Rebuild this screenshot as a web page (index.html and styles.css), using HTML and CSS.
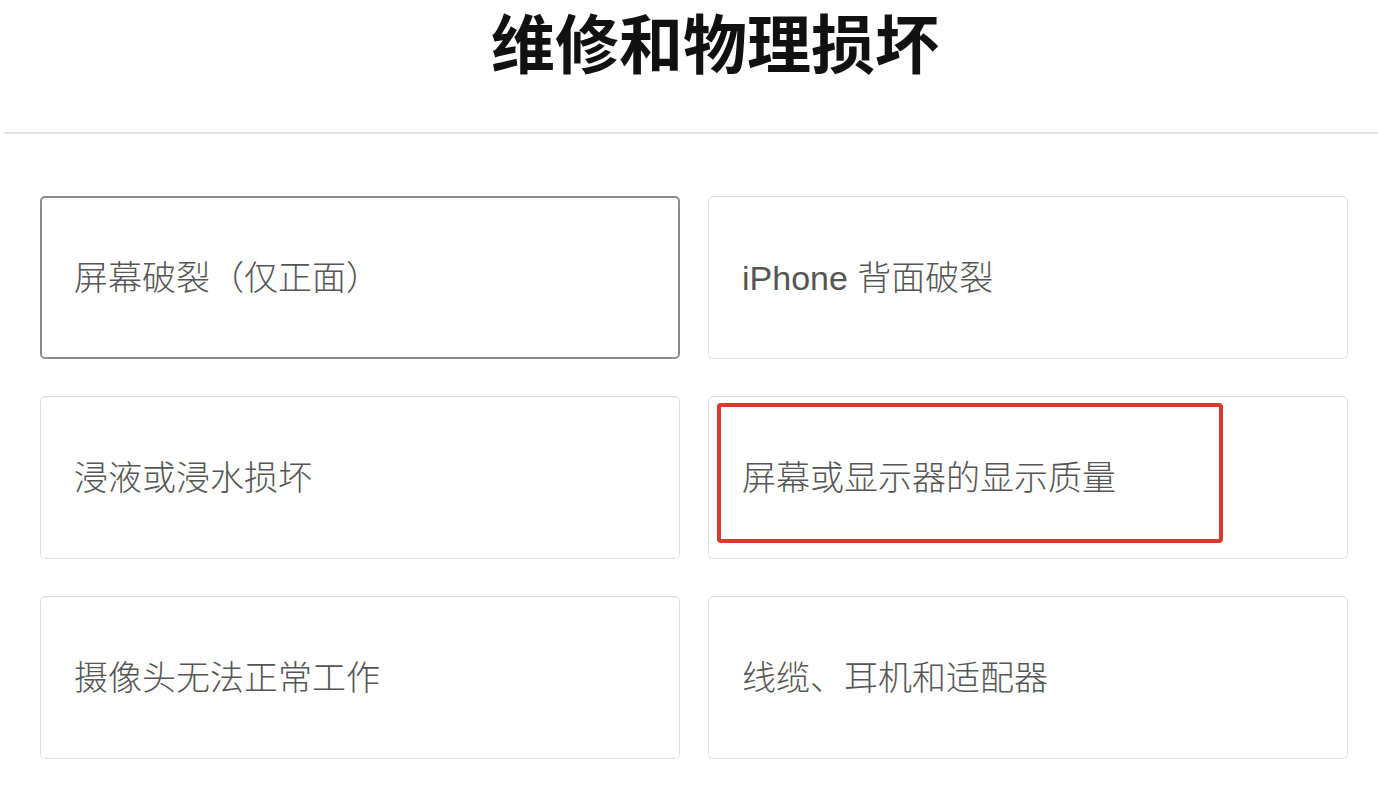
FILE: index.html
```html
<!DOCTYPE html>
<html lang="zh-CN">
<head>
<meta charset="utf-8">
<title>维修和物理损坏</title>
<link rel="stylesheet" href="styles.css">
</head>
<body>
<header class="header">
  <h1 class="title">维修和物理损坏</h1>
</header>
<hr class="divider">
<main class="grid">
  <div class="card card-active">屏幕破裂（仅正面）</div>
  <div class="card">iPhone 背面破裂</div>
  <div class="card">浸液或浸水损坏</div>
  <div class="card">屏幕或显示器的显示质量<span class="highlight"></span></div>
  <div class="card">摄像头无法正常工作</div>
  <div class="card">线缆、耳机和适配器</div>
</main>
</body>
</html>
```

FILE: styles.css
```css
html, body {
  margin: 0;
  padding: 0;
  background: #fff;
}
body {
  font-family: "Noto Sans CJK SC", "Noto Sans", sans-serif;
  width: 1378px;
  height: 790px;
  overflow: hidden;
}
.header {
  display: flex;
  justify-content: center;
  height: 132px;
  box-sizing: border-box;
}
.title {
  margin: 0;
  font-size: 64px;
  font-weight: 700;
  color: #111;
  line-height: 80px;
  padding-left: 52px;
}
.divider {
  margin: 0 0 0 4px;
  border: 0;
  border-top: 2px solid #e3e3e3;
  height: 0;
}
.grid {
  display: grid;
  grid-template-columns: 640px 640px;
  column-gap: 28px;
  row-gap: 37px;
  padding: 62px 0 0 40px;
}
.card {
  position: relative;
  height: 163px;
  box-sizing: border-box;
  border: 1px solid #dedede;
  border-radius: 5px;
  display: flex;
  align-items: center;
  padding-left: 33px;
  padding-bottom: 4px;
  font-family: "Liberation Sans", "Noto Sans CJK SC", sans-serif;
  font-size: 34px;
  font-weight: 300;
  color: #555;
}
.card-active {
  border: 2px solid #8c8c8c;
  padding-left: 32px;
}
.highlight {
  position: absolute;
  left: 8px;
  top: 6px;
  width: 506px;
  height: 140px;
  box-sizing: border-box;
  border: 4px solid #d93a2e;
  border-radius: 4px;
}
```
